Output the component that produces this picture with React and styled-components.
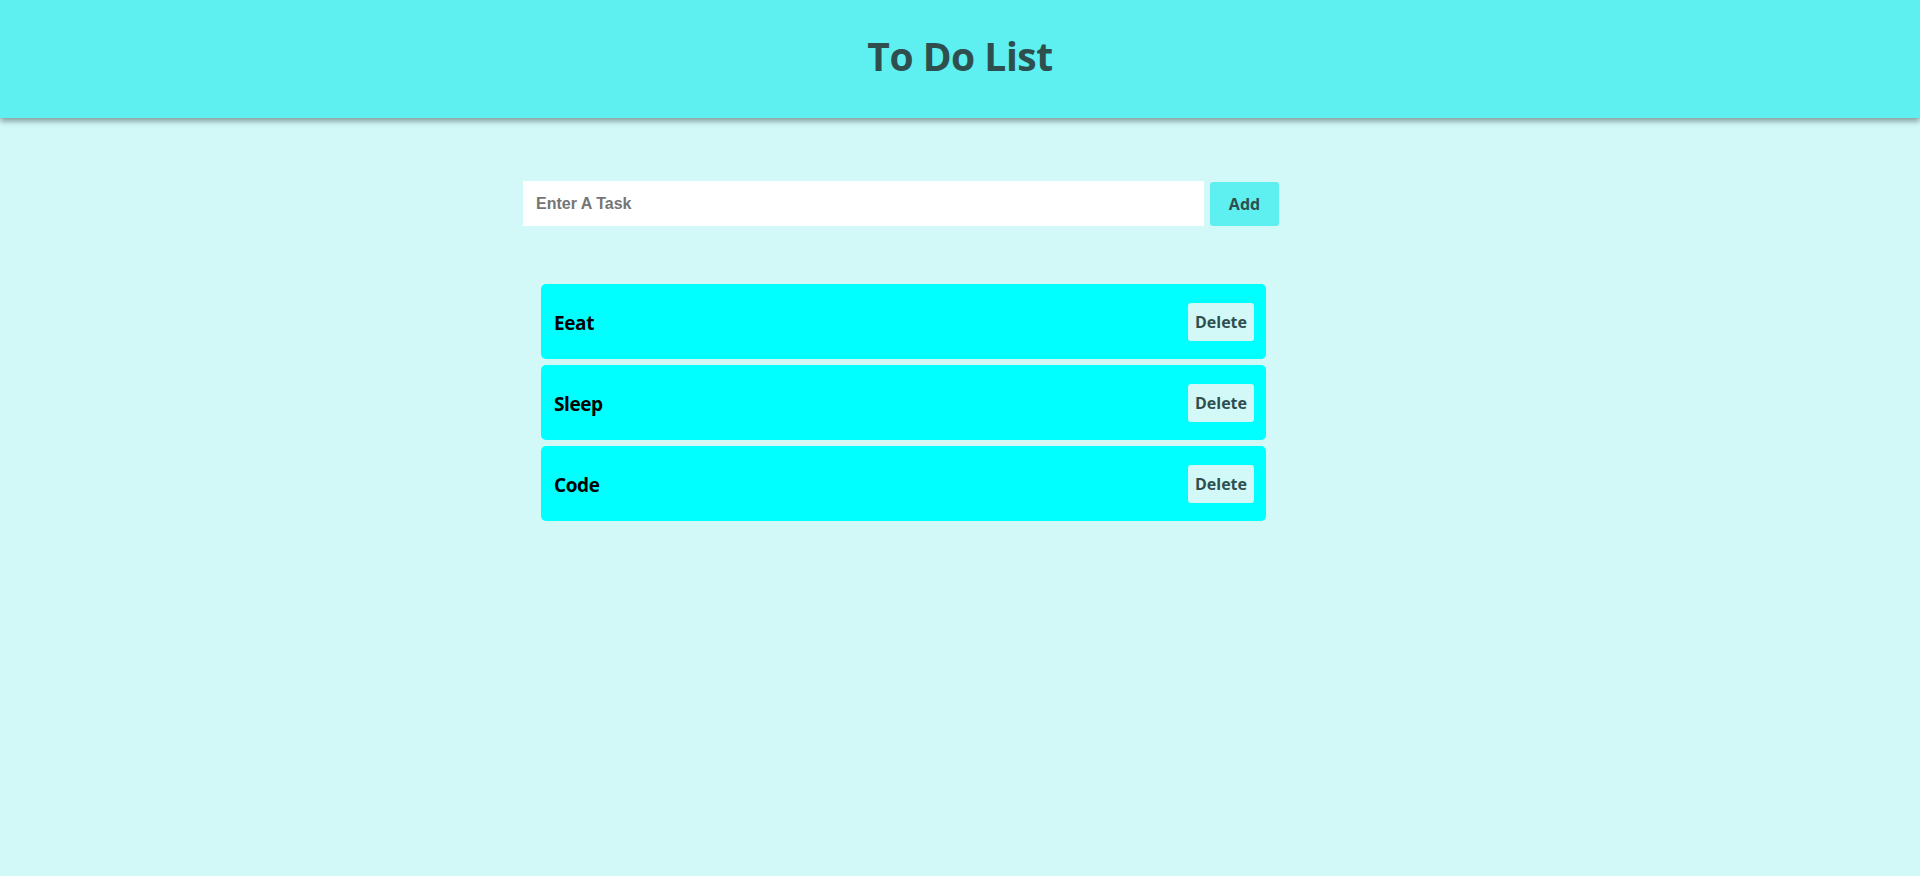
import { useState } from "react";
import styled, { createGlobalStyle } from "styled-components";

const GlobalStyle = createGlobalStyle`
  body {
    margin: 0;
    background-color: #d2f9f8;
    font-family: "Open Sans", "Noto Sans", sans-serif;
    min-height: 100vh;
  }
`;

const Header = styled.header`
  height: 118px;
  background-color: #5ef0f0;
  box-shadow: 0 3px 6px rgba(0, 0, 0, 0.4);
  display: flex;
  justify-content: center;
  align-items: center;
  h1 {
    margin: 0 0 8px;
    font-size: 39px;
    font-weight: 700;
    color: #2f4f4f;
    letter-spacing: -0.5px;
  }
`;

const Main = styled.main`
  width: 756px;
  margin-left: 523px;
  padding-top: 63px;
`;

const Form = styled.form`
  display: flex;
  gap: 6px;
  align-items: center;
`;

const TaskInput = styled.input`
  flex: 1;
  height: 45px;
  box-sizing: border-box;
  border: none;
  outline: none;
  padding: 0 13px;
  background: white;
  font-family: "Liberation Sans", Arial, sans-serif;
  font-weight: 700;
  font-size: 16px;
  &::placeholder {
    color: #757575;
  }
`;

const Button = styled.button`
  border: none;
  border-radius: 3px;
  font-family: "Open Sans", "Noto Sans", sans-serif;
  font-weight: 700;
  font-size: 16px;
  color: #2f4f4f;
  cursor: pointer;
  background-color: ${(props) => (props.$light ? "#d2f9f8" : "#5ef0f0")};
  width: ${(props) => (props.$light ? "66px" : "69px")};
  height: ${(props) => (props.$light ? "38px" : "44px")};
  padding: 0;
`;

const List = styled.ul`
  list-style: none;
  margin: 58px 13px 0 18px;
  padding: 0;
  display: flex;
  flex-direction: column;
  gap: 6px;
`;

const Item = styled.li`
  height: 75px;
  box-sizing: border-box;
  background-color: #00ffff;
  border-radius: 5px;
  display: flex;
  align-items: center;
  justify-content: space-between;
  padding: 0 12px 0 13px;
  span {
    font-size: 19px;
    font-weight: 700;
    color: #000;
    letter-spacing: -0.4px;
    margin-top: 2px;
  }
`;

export default function App() {
  const [tasks, setTasks] = useState(["Eeat", "Sleep", "Code"]);
  const [text, setText] = useState("");

  const addTask = (e) => {
    e.preventDefault();
    if (!text.trim()) return;
    setTasks([...tasks, text]);
    setText("");
  };

  return (
    <>
      <GlobalStyle />
      <Header>
        <h1>To Do List</h1>
      </Header>
      <Main>
        <Form onSubmit={addTask}>
          <TaskInput
            placeholder="Enter A Task"
            value={text}
            onChange={(e) => setText(e.target.value)}
          />
          <Button type="submit">Add</Button>
        </Form>
        <List>
          {tasks.map((task, i) => (
            <Item key={i}>
              <span>{task}</span>
              <Button
                $light
                onClick={() => setTasks(tasks.filter((_, j) => j !== i))}
              >
                Delete
              </Button>
            </Item>
          ))}
        </List>
      </Main>
    </>
  );
}
